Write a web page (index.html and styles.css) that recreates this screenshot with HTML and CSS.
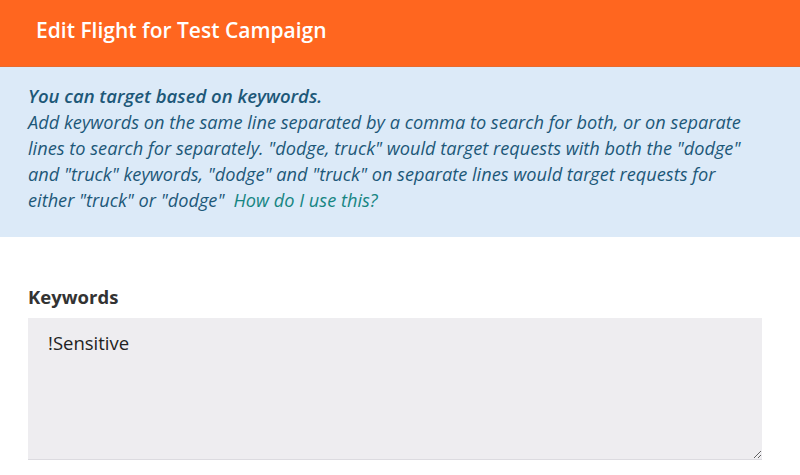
FILE: index.html
```html
<!DOCTYPE html>
<html>
<head>
<meta charset="utf-8">
<link rel="stylesheet" href="styles.css">
</head>
<body>
<header class="topbar">
  <h1 class="title">Edit Flight for Test Campaign</h1>
</header>
<section class="info">
  <p class="info-lead">You can target based on keywords.</p>
  <p class="info-text">Add keywords on the same line separated by a comma to search for both, or on separate lines to search for separately. "dodge, truck" would target requests with both the "dodge" and "truck" keywords, "dodge" and "truck" on separate lines would target requests for either "truck" or "dodge"<a class="info-link" href="#">How do I use this?</a></p>
</section>
<main class="form">
  <label class="field-label" for="kw">Keywords</label>
  <textarea id="kw" class="field-input">!Sensitive</textarea>
</main>
</body>
</html>
```
FILE: styles.css
```css
html, body {
  margin: 0;
  padding: 0;
  background: #ffffff;
  font-family: "Open Sans", "Noto Sans", sans-serif;
}
.topbar {
  background: #ff661f;
  height: 66px;
  display: flex;
  align-items: center;
  padding: 0 36px;
  border-bottom: 1px solid #e86a2e;
}
.title {
  margin: 0;
  color: #ffffff;
  font-size: 21px;
  font-weight: 600;
  padding-bottom: 6px;
}
.info {
  background: #dceaf8;
  padding: 16px 52px 24px 28px;
  color: #1d5878;
  font-style: italic;
  font-size: 18.2px;
  line-height: 26px;
}
.info p {
  margin: 0;
}
.info-lead {
  font-weight: 600;
  font-size: 18.5px;
}
.info-link {
  color: #168582;
  text-decoration: none;
  margin-left: 9px;
}
.form {
  padding: 47px 28px 0 28px;
  display: flex;
  flex-direction: column;
}
.field-label {
  font-size: 18.5px;
  font-weight: 700;
  color: #333333;
  line-height: 26px;
  margin-bottom: 8px;
}
.field-input {
  box-sizing: border-box;
  width: 734px;
  height: 142px;
  background: #eeedf0;
  border: none;
  border-bottom: 1px solid #dcdbe0;
  padding: 12px 20px;
  font-family: "Open Sans", "Noto Sans", sans-serif;
  font-size: 18.5px;
  line-height: 26px;
  color: #222222;
  resize: vertical;
  outline: none;
}
```
